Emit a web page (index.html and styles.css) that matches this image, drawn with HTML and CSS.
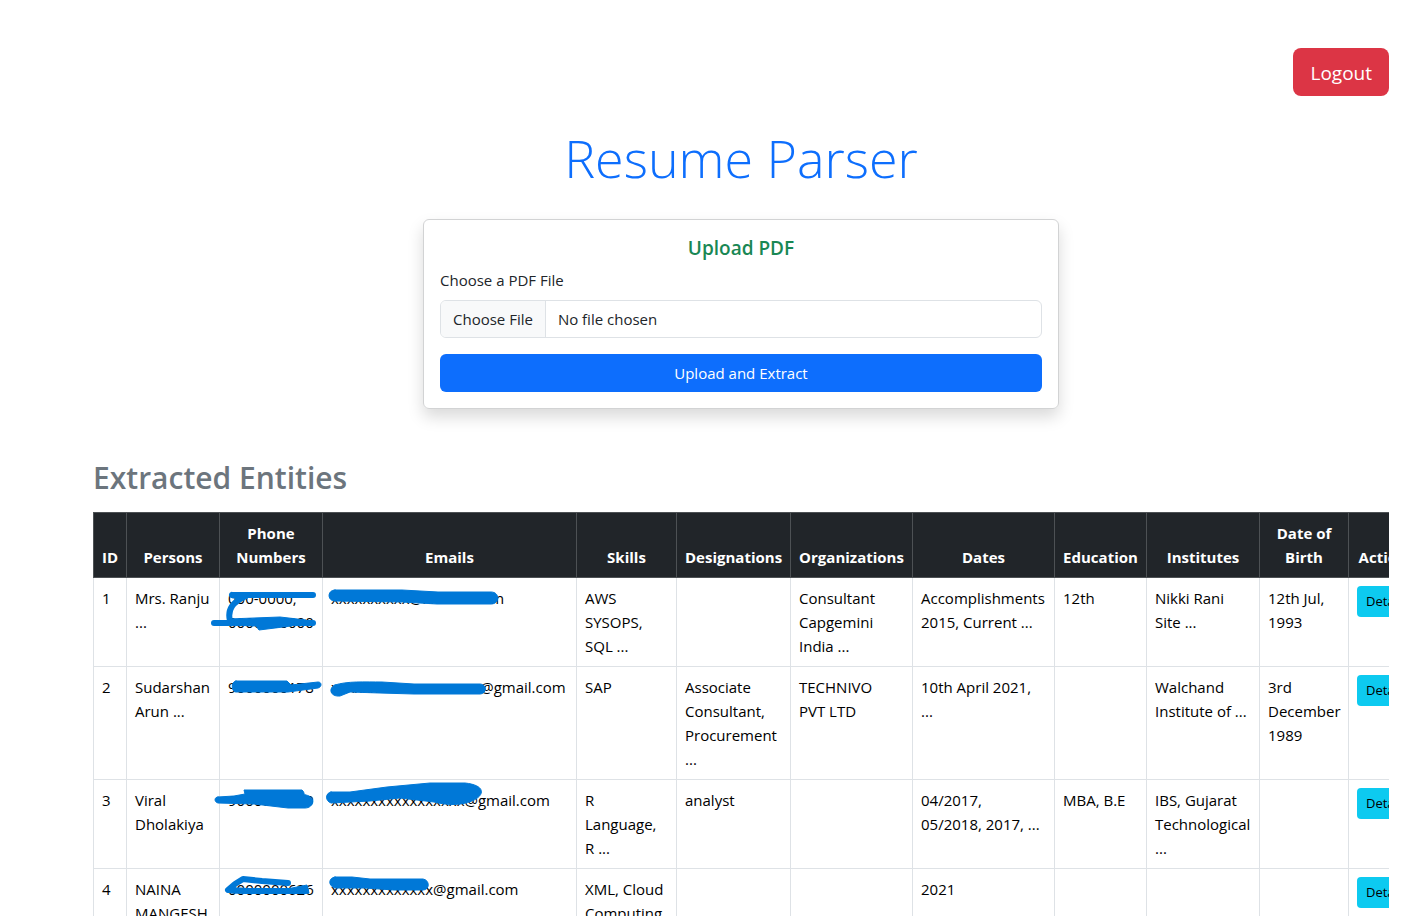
FILE: index.html
```html
<!DOCTYPE html>
<html lang="en">
<head>
<meta charset="utf-8">
<title>Resume Parser</title>
<link rel="stylesheet" href="styles.css">
</head>
<body>
<main class="container">
  <div class="topbar"><button class="btn btn-logout" type="button">Logout</button></div>
  <h1 class="title">Resume Parser</h1>
  <form class="card">
    <h2 class="card-title">Upload PDF</h2>
    <label class="label" for="pdf">Choose a PDF File</label>
    <input class="file" id="pdf" type="file" accept=".pdf">
    <button class="btn btn-upload" type="button">Upload and Extract</button>
  </form>
  <h2 class="section-title">Extracted Entities</h2>
  <div class="table-wrap">
    <table class="entities">
      <colgroup>
        <col class="w-id"><col class="w-person"><col class="w-phone"><col class="w-email"><col class="w-skill"><col class="w-desig"><col class="w-org"><col class="w-dates"><col class="w-edu"><col class="w-inst"><col class="w-birth"><col class="w-act">
      </colgroup>
      <thead>
        <tr><th>ID</th><th>Persons</th><th>Phone Numbers</th><th>Emails</th><th>Skills</th><th>Designations</th><th>Organizations</th><th>Dates</th><th>Education</th><th>Institutes</th><th>Date of Birth</th><th>Actions</th></tr>
      </thead>
      <tbody>
        <tr>
          <td>1</td><td>Mrs. Ranju ...</td><td>000-0000, 0000000000</td><td>xxxxxxxxxx@xxxxxx.com</td><td>AWS SYSOPS, SQL ...</td><td></td><td>Consultant Capgemini India ...</td><td>Accomplishments 2015, Current ...</td><td>12th</td><td>Nikki Rani Site ...</td><td>12th Jul, 1993</td><td><button class="btn btn-details" type="button">Details</button></td>
        </tr>
        <tr>
          <td>2</td><td>Sudarshan Arun ...</td><td>9000000178</td><td>xxxxxxxxxxxxxxxxxxx@gmail.com</td><td>SAP</td><td>Associate Consultant, Procurement ...</td><td>TECHNIVO<br>PVT LTD</td><td>10th April 2021, ...</td><td></td><td>Walchand Institute of ...</td><td>3rd December 1989</td><td><button class="btn btn-details" type="button">Details</button></td>
        </tr>
        <tr>
          <td>3</td><td>Viral Dholakiya</td><td>9000000009</td><td>xxxxxxxxxxxxxxxxx@gmail.com</td><td>R Language, R ...</td><td>analyst</td><td></td><td>04/2017, 05/2018, 2017, ...</td><td>MBA, B.E</td><td>IBS, Gujarat Technological ...</td><td></td><td><button class="btn btn-details" type="button">Details</button></td>
        </tr>
        <tr>
          <td>4</td><td>NAINA MANGESH</td><td>0000000626</td><td>xxxxxxxxxxxxx@gmail.com</td><td>XML, Cloud Computing</td><td></td><td></td><td>2021</td><td></td><td></td><td></td><td><button class="btn btn-details" type="button">Details</button></td>
        </tr>
      </tbody>
    </table>
    <svg class="marker" width="500" height="404" viewBox="93 512 500 404" aria-hidden="true">
      <path d="M313 595H232M232 595C236 597 241 594 246 596C233 602 227 609 230 621" stroke-width="6"/>
      <path d="M214 623H313" stroke-width="6"/>
      <path d="M229 619L280 617L306 620L291 626L259 630L256 626L229 625Z" class="fill"/>
      <path d="M335 590H402L438 592H491C500 592 500 604 491 604H437L402 602L335 601C327 601 327 590 335 590Z" class="fill"/>
      <path d="M236 681H287L291 685L318 682C322 682 322 687 318 688L288 692H236C231 692 231 681 236 681Z" class="fill"/>
      <path d="M335 685C347 681 365 682 382 682L414 684H480C487 684 487 694 480 694H414L380 693L350 692L340 696C330 697 328 688 335 685Z" class="fill"/>
      <path d="M218 797L234 796L245 794L244 790L302 790C305 792 303 795 306 795C316 797 314 808 305 808H288L254 804L218 803C214 802 214 797 218 797Z" class="fill"/>
      <path d="M331 792H350L387 787L430 783H465C485 785 486 795 472 801C460 806 446 805 434 802L400 798L370 801L331 803C325 801 325 793 331 792Z" class="fill"/>
      <path d="M288 883L262 881L243 879L235 884L228 890L246 891L306 891" stroke-width="6"/>
      <path d="M235 888L258 889L282 890L307 885L309 893H232Z" class="fill"/>
      <path d="M335 877L352 877L370 879H423C430 880 430 890 423 890H394L365 888L335 888C328 886 328 878 335 877Z" class="fill"/>
    </svg>
  </div>
</main>
</body>
</html>
```

FILE: styles.css
```css
* { box-sizing: border-box; }
body {
  margin: 0;
  padding-left: 57px;
  background: #fff;
  color: #212529;
  font: 15px/24px "Open Sans", "Noto Sans", sans-serif;
  overflow-x: hidden;
}
.container { max-width: 1320px; margin: 0 auto; padding: 48px 12px; }
.topbar { display: flex; justify-content: flex-end; }
.btn {
  border: 0;
  border-radius: 6px;
  font: inherit;
  color: #fff;
  cursor: pointer;
}
.btn-logout { padding: 10px 17px 8px; border-radius: 8px; background: #dc3545; font-size: 19px; line-height: 30px; }
.title {
  margin: 28px 0;
  color: #0d6efd;
  font-size: 52px;
  font-weight: 300;
  line-height: 67px;
  text-align: center;
}
.card {
  display: flex;
  flex-direction: column;
  width: 636px;
  max-width: 100%;
  margin: 0 auto 48px;
  padding: 16px;
  border: 1px solid #d2d3d4;
  border-radius: 6px;
  box-shadow: 0 8px 16px rgba(0, 0, 0, .15);
}
.card-title { margin: 0 0 8px; color: #198754; font-size: 19px; font-weight: 600; line-height: 24px; text-align: center; }
.label { margin-bottom: 8px; }
.file {
  width: 100%;
  height: 38px;
  margin-bottom: 16px;
  padding: 6px 12px;
  border: 1px solid #dee2e6;
  border-radius: 6px;
  color: #212529;
  font: inherit;
  overflow: hidden;
}
.file::file-selector-button {
  margin: -6px 12px -6px -12px;
  padding: 6px 12px;
  border: 0 solid #dee2e6;
  border-right-width: 1px;
  background: #f8f9fa;
  color: #212529;
  font: inherit;
}
.btn-upload { padding: 7px 12px; background: #0d6efd; }
.section-title { margin: 0 0 14px; color: #6c757d; font-size: 30px; font-weight: 600; line-height: 41px; }
.table-wrap { position: relative; overflow: hidden; }
.entities { width: 1331px; border-collapse: collapse; table-layout: fixed; color: #000; }
.w-id { width: 33px; }
.w-person { width: 93px; }
.w-phone { width: 103px; }
.w-email { width: 254px; }
.w-skill { width: 100px; }
.w-desig { width: 114px; }
.w-org { width: 122px; }
.w-dates { width: 142px; }
.w-edu { width: 92px; }
.w-inst { width: 113px; }
.w-birth { width: 89px; }
.w-act { width: 76px; }
.entities th {
  padding: 8px;
  border: 1px solid #4d5154;
  background: #212529;
  color: #fff;
  font-weight: 700;
  text-align: center;
  vertical-align: bottom;
}
.entities td { padding: 8px; border: 1px solid #dee2e6; vertical-align: top; }
.btn-details { display: block; padding: 5px 9px; border-radius: 4px; background: #0dcaf0; color: #000; font-size: 13px; line-height: 21px; }
.marker { position: absolute; top: 0; left: 0; fill: none; stroke: #0078d7; stroke-linecap: round; stroke-linejoin: round; }
.marker .fill { fill: #0078d7; stroke-width: 1; }
```
